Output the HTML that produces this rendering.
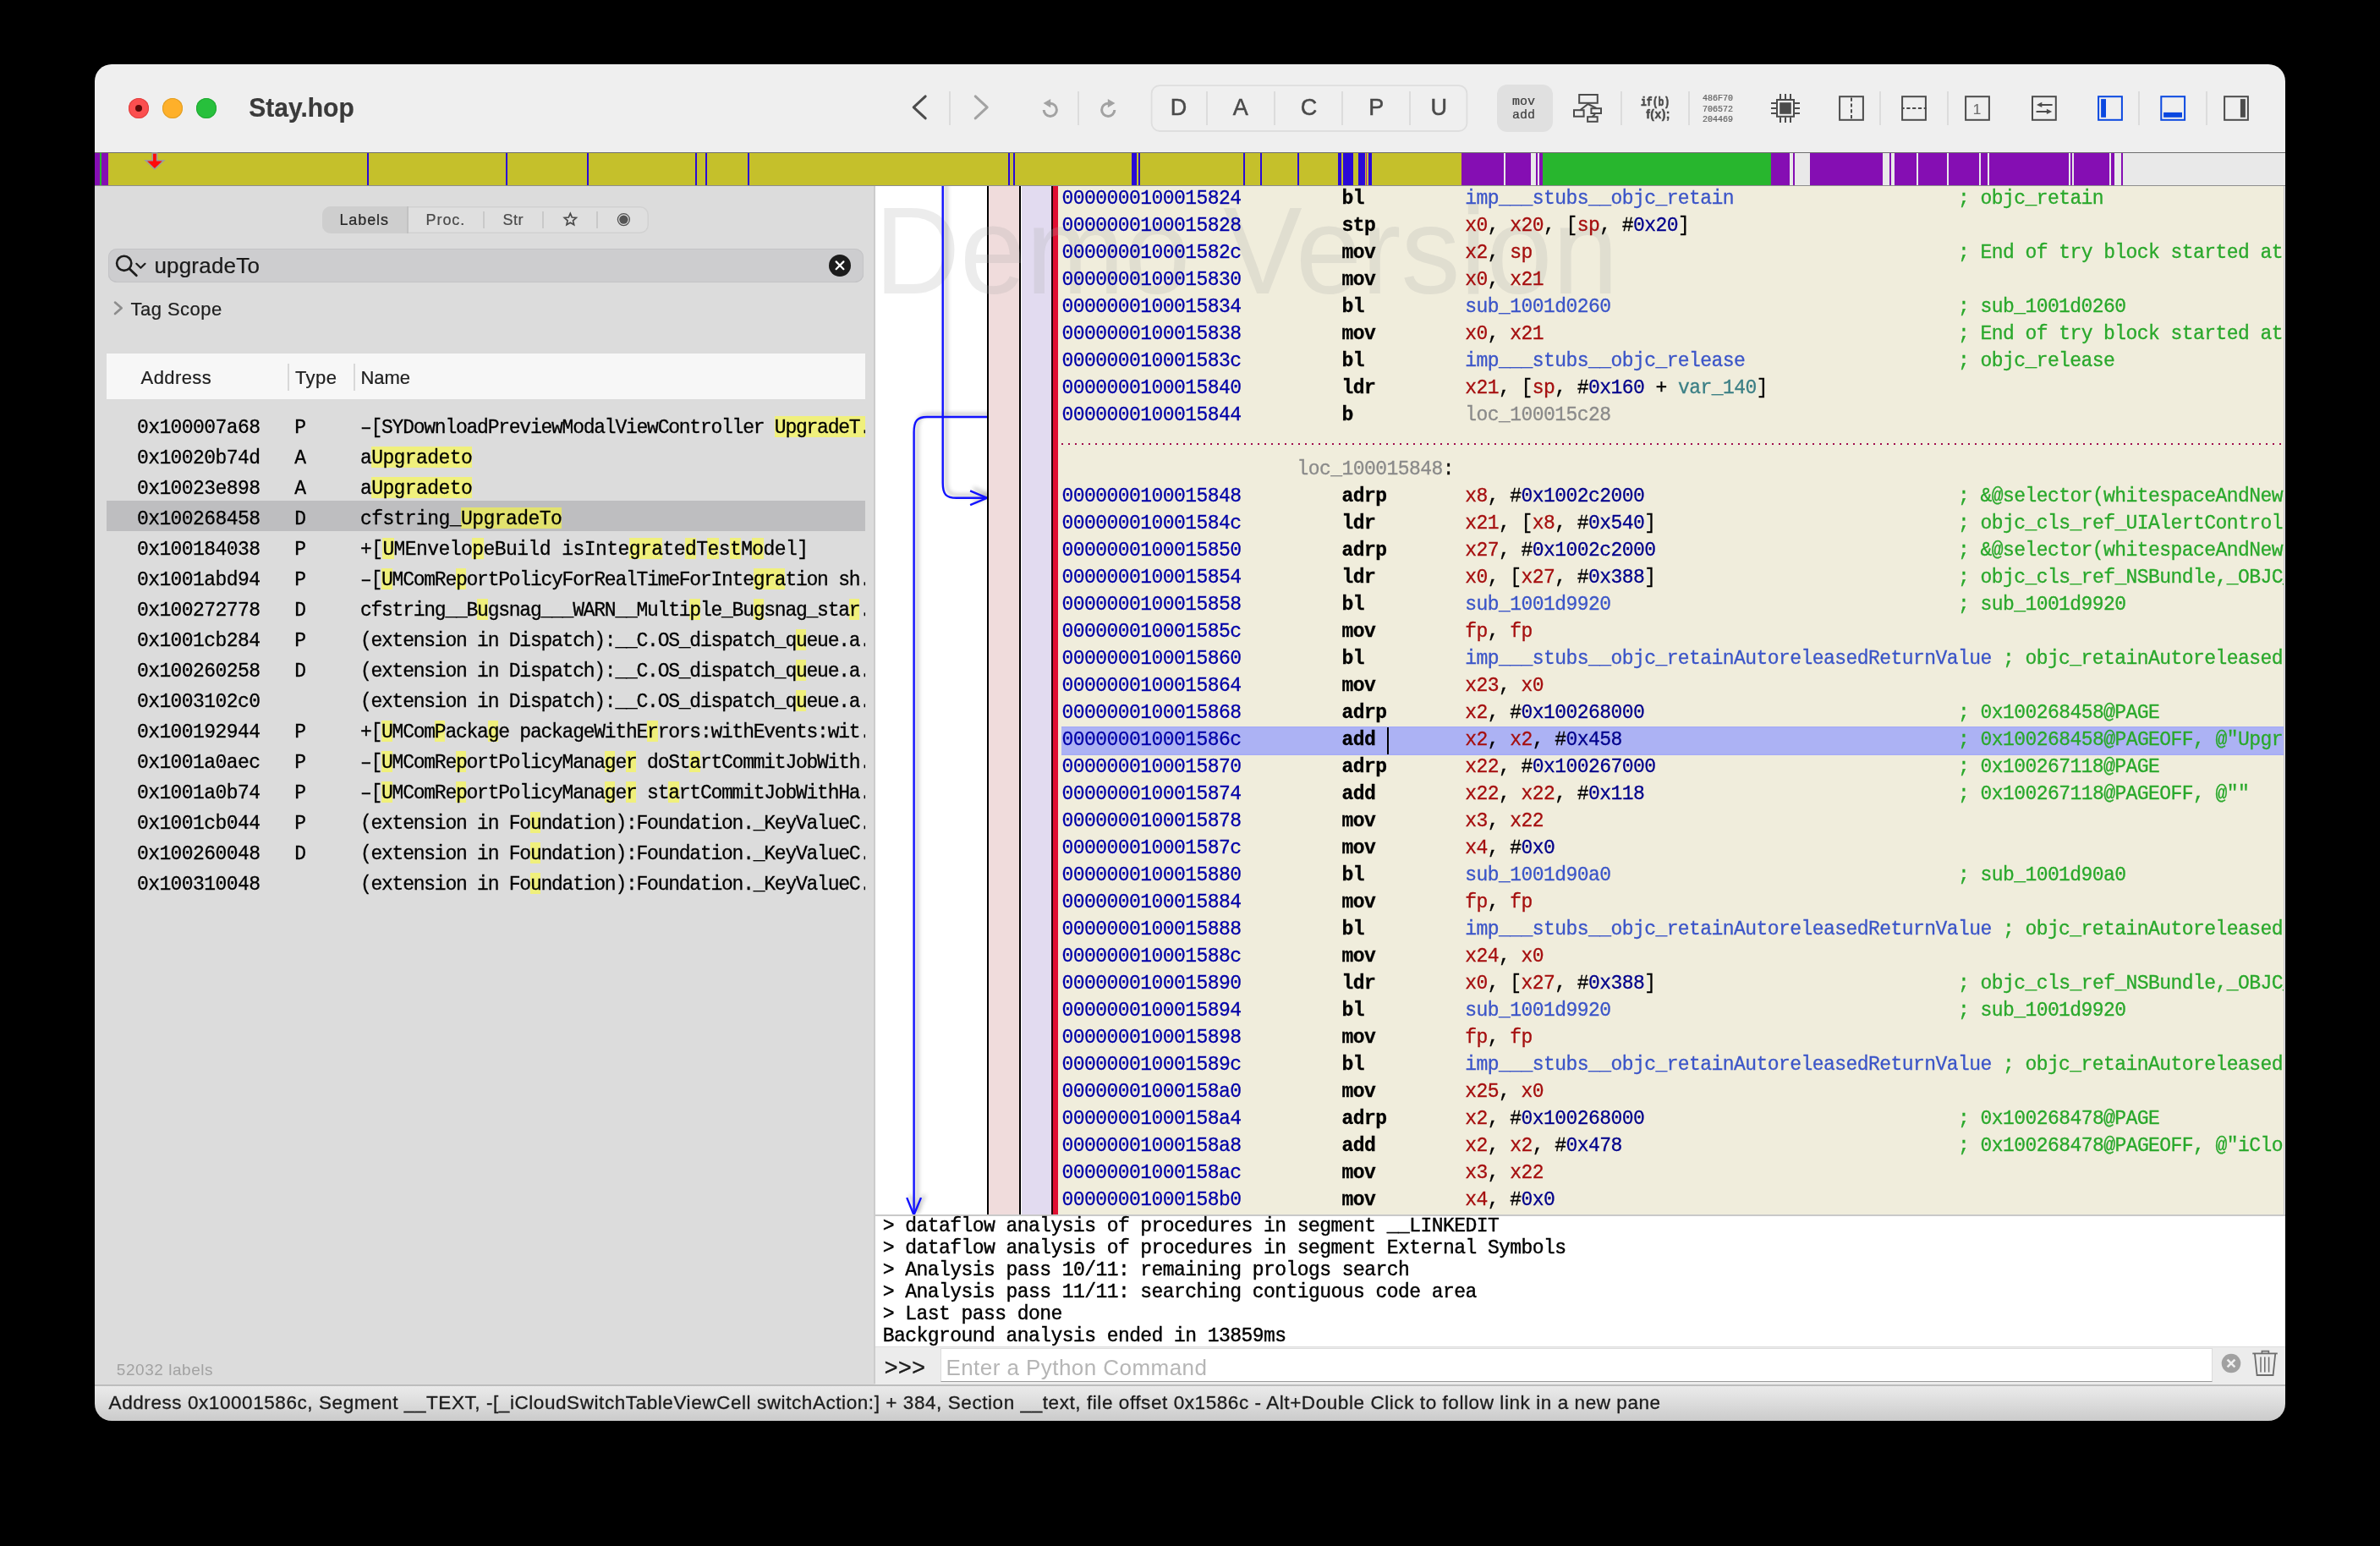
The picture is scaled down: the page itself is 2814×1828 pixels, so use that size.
<!DOCTYPE html>
<html><head><meta charset="utf-8"><title>Stay.hop</title>
<style>
html,body{margin:0;padding:0;background:#000;}
body{width:2814px;height:1828px;position:relative;overflow:hidden;font-family:"Liberation Sans",sans-serif;}
#win{position:absolute;left:0;top:0;width:2814px;height:1828px;clip-path:inset(76px 112px 148px 112px round 20px);background:#dcdcdc;will-change:transform;}
.r{position:absolute;}
.t{position:absolute;white-space:pre;-webkit-text-stroke:0.22px;}
svg{position:absolute;left:0;top:0;overflow:visible;}
.hl{background:#f0f07c;}
.row{position:absolute;left:1255.5px;height:32px;white-space:pre;font:23px/32px "Liberation Mono",monospace;letter-spacing:-0.56px;color:#000;-webkit-text-stroke:0.3px;}
.row b{font-weight:bold;}
.a{color:#0000a8;} .g{color:#a50f0f;} .n{color:#00008b;} .s{color:#3b55c8;} .c{color:#29a82b;} .l{color:#8a8a8a;} .v{color:#3b7f85;}
.lr{position:absolute;left:126px;width:897px;height:36px;white-space:pre;font:23px/36px "Liberation Mono",monospace;color:#000;overflow:hidden;-webkit-text-stroke:0.3px;}
.lr span.c1{position:absolute;left:36.5px;top:1px;letter-spacing:0.04px;}
.lr span.c2{position:absolute;left:223px;top:1px;}
.lr span.c3{position:absolute;left:300.5px;top:1px;}
.lr i{font-style:normal;background:#f0f07c;padding:2.5px 0 2.5px 0;}
.con{position:absolute;left:1045px;white-space:pre;font:23px/26px "Liberation Mono",monospace;letter-spacing:-0.56px;color:#000;-webkit-text-stroke:0.4px;}
</style></head><body><div id="win">

<div class="r" style="left:112px;top:76px;width:2590px;height:104px;background:#efefef;"></div>
<div class="r" style="left:152px;top:116px;width:24px;height:24px;border-radius:50%;background:#fb4f4f;box-shadow:inset 0 0 0 1px #e0403f;"></div>
<div class="r" style="left:192px;top:116px;width:24px;height:24px;border-radius:50%;background:#feb02a;box-shadow:inset 0 0 0 1px #e09e25;"></div>
<div class="r" style="left:232px;top:116px;width:24px;height:24px;border-radius:50%;background:#27c03c;box-shadow:inset 0 0 0 1px #22a834;"></div>
<div class="r" style="left:160px;top:124px;width:8px;height:8px;border-radius:50%;background:#5c0a08;"></div>
<div class="t" style="left:294.30px;top:108.11px;font:bold 30px/39px 'Liberation Sans', sans-serif;color:#3a3a3a;letter-spacing:0.0px;transform-origin:0 29.89px;transform:scaleY(1.066);">Stay.hop</div>
<div class="r" style="left:1122px;top:108px;width:2px;height:40px;background:#dcdcdc;"></div>
<div class="r" style="left:1274px;top:108px;width:2px;height:40px;background:#dcdcdc;"></div>
<div class="r" style="left:1916px;top:108px;width:2px;height:40px;background:#dcdcdc;"></div>
<div class="r" style="left:1996px;top:108px;width:2px;height:40px;background:#dcdcdc;"></div>
<div class="r" style="left:2222px;top:108px;width:2px;height:40px;background:#dcdcdc;"></div>
<div class="r" style="left:2302px;top:108px;width:2px;height:40px;background:#dcdcdc;"></div>
<div class="r" style="left:2528px;top:108px;width:2px;height:40px;background:#dcdcdc;"></div>
<div class="r" style="left:2608px;top:108px;width:2px;height:40px;background:#dcdcdc;"></div>
<svg width="2814" height="200" viewBox="0 0 2814 200" fill="none">
<path d="M1094.2 113.9 L1080.2 126.9 L1094.2 139.9" stroke="#4c4c4c" stroke-width="3" stroke-linecap="round" stroke-linejoin="round"/>
<path d="M1153.2 113.9 L1167.2 126.9 L1153.2 139.9" stroke="#a2a2a2" stroke-width="3" stroke-linecap="round" stroke-linejoin="round"/>
<path d="M1241.8 122.3 A7.6 7.6 0 1 1 1234.2 129.9" stroke="#a2a2a2" stroke-width="3"/>
<path d="M1233.6 122.1 L1242.2 117 L1242.2 127.2 Z" fill="#a2a2a2"/>
<path d="M1310.2 122.3 A7.6 7.6 0 1 0 1317.8 129.9" stroke="#a2a2a2" stroke-width="3"/>
<path d="M1318.4 122.1 L1309.8 117 L1309.8 127.2 Z" fill="#a2a2a2"/>
<rect x="1361.6" y="101.2" width="372.8" height="53.8" rx="9.5" ry="9.5" stroke="#dedede" stroke-width="1.8"/>
<rect x="1426" y="108" width="2" height="40" fill="#dcdcdc"/>
<rect x="1506" y="108" width="2" height="40" fill="#dcdcdc"/>
<rect x="1586" y="108" width="2" height="40" fill="#dcdcdc"/>
<rect x="1666" y="108" width="2" height="40" fill="#dcdcdc"/>
<rect x="1770" y="100" width="66" height="56" rx="12" ry="12" fill="#e0e0e0"/>
<rect x="1867.2" y="112" width="21.6" height="9.8" stroke="#4c4c4c" stroke-width="2"/>
<rect x="1861" y="130.2" width="11.6" height="7.5" stroke="#4c4c4c" stroke-width="2"/>
<rect x="1881.4" y="128.2" width="11.6" height="5.8" stroke="#4c4c4c" stroke-width="2"/>
<rect x="1877.1" y="138.2" width="11.6" height="5.6" stroke="#4c4c4c" stroke-width="2"/>
<path d="M1868.5 130 L1877.6 123 L1887.5 128" stroke="#4c4c4c" stroke-width="2"/>
<path d="M1886 135 L1882.5 138" stroke="#4c4c4c" stroke-width="2"/>
<rect x="2101" y="118" width="20" height="19.8" stroke="#4c4c4c" stroke-width="2"/>
<rect x="2104.2" y="121.2" width="13.6" height="13.6" fill="#4c4c4c"/>
<rect x="2104" y="111" width="2" height="6.5" fill="#4c4c4c"/>
<rect x="2104" y="138.5" width="2" height="6.5" fill="#4c4c4c"/>
<rect x="2110" y="111" width="2" height="6.5" fill="#4c4c4c"/>
<rect x="2110" y="138.5" width="2" height="6.5" fill="#4c4c4c"/>
<rect x="2116" y="111" width="2" height="6.5" fill="#4c4c4c"/>
<rect x="2116" y="138.5" width="2" height="6.5" fill="#4c4c4c"/>
<rect x="2094" y="121" width="6.5" height="2" fill="#4c4c4c"/>
<rect x="2121.5" y="121" width="6.5" height="2" fill="#4c4c4c"/>
<rect x="2094" y="127" width="6.5" height="2" fill="#4c4c4c"/>
<rect x="2121.5" y="127" width="6.5" height="2" fill="#4c4c4c"/>
<rect x="2094" y="133" width="6.5" height="2" fill="#4c4c4c"/>
<rect x="2121.5" y="133" width="6.5" height="2" fill="#4c4c4c"/>
<rect x="2175.1" y="114.2" width="27.8" height="27.6" stroke="#4c4c4c" stroke-width="2"/>
<path d="M2189 115 V142" stroke="#4c4c4c" stroke-width="2" stroke-dasharray="4.2 2.6" stroke-dashoffset="-0.6"/>
<rect x="2249.1" y="114.2" width="27.8" height="27.6" stroke="#4c4c4c" stroke-width="2"/>
<path d="M2249 128 H2278" stroke="#4c4c4c" stroke-width="2" stroke-dasharray="4.2 2.6" stroke-dashoffset="1.5"/>
<rect x="2324.1" y="114.2" width="27.8" height="27.6" stroke="#4c4c4c" stroke-width="2"/>
<rect x="2403.0" y="114.2" width="27.8" height="27.6" stroke="#4c4c4c" stroke-width="2"/>
<path d="M2413 123.9 H2425.9" stroke="#4c4c4c" stroke-width="2" stroke-linecap="round"/>
<path d="M2408 123.9 L2414.3 120.7 L2414.3 127.1 Z" fill="#4c4c4c"/>
<path d="M2408.3 131.9 H2421" stroke="#4c4c4c" stroke-width="2" stroke-linecap="round"/>
<path d="M2426.2 131.9 L2419.9 128.7 L2419.9 135.1 Z" fill="#4c4c4c"/>
<rect x="2481.1" y="114.2" width="27.8" height="27.6" stroke="#0a48e0" stroke-width="2"/>
<rect x="2484.1" y="117.1" width="5.9" height="21.7" fill="#0a48e0"/>
<rect x="2555.3" y="114.2" width="27.8" height="27.6" stroke="#0a48e0" stroke-width="2"/>
<rect x="2558.1" y="132.9" width="21.9" height="5.9" fill="#0a48e0"/>
<rect x="2630.1" y="114.2" width="27.8" height="27.6" stroke="#4c4c4c" stroke-width="2"/>
<rect x="2648.9" y="117.1" width="6" height="21.7" fill="#4c4c4c"/>
</svg>
<div class="t" style="left:1363.6px;width:60px;text-align:center;top:109.64px;font:27px/34px 'Liberation Sans', sans-serif;color:#4a4a4a;-webkit-text-stroke:0.5px;">D</div>
<div class="t" style="left:1436.8px;width:60px;text-align:center;top:109.64px;font:27px/34px 'Liberation Sans', sans-serif;color:#4a4a4a;-webkit-text-stroke:0.5px;">A</div>
<div class="t" style="left:1517.4px;width:60px;text-align:center;top:109.64px;font:27px/34px 'Liberation Sans', sans-serif;color:#4a4a4a;-webkit-text-stroke:0.5px;">C</div>
<div class="t" style="left:1597.2px;width:60px;text-align:center;top:109.64px;font:27px/34px 'Liberation Sans', sans-serif;color:#4a4a4a;-webkit-text-stroke:0.5px;">P</div>
<div class="t" style="left:1671.2px;width:60px;text-align:center;top:109.64px;font:27px/34px 'Liberation Sans', sans-serif;color:#4a4a4a;-webkit-text-stroke:0.5px;">U</div>
<div class="t" style="left:1788.00px;top:110.51px;font:normal 15px/20px 'Liberation Mono', monospace;color:#3e3e3e;letter-spacing:0px;">mov</div>
<div class="t" style="left:1788.00px;top:126.81px;font:normal 15px/20px 'Liberation Mono', monospace;color:#3e3e3e;letter-spacing:0px;">add</div>
<div class="t" style="left:1939.60px;top:111.97px;font:bold 14px/18px 'Liberation Mono', monospace;color:#4a4a4a;letter-spacing:0px;transform-origin:0 0;transform:scaleX(0.815);-webkit-text-stroke:0.6px;">if(b)</div>
<div class="t" style="left:1946.20px;top:126.15px;font:bold 14px/18px 'Liberation Sans', sans-serif;color:#4a4a4a;letter-spacing:0.45px;-webkit-text-stroke:0.45px;">f(x);</div>
<div class="t" style="left:2013.00px;top:109.64px;font:normal 10px/13px 'Liberation Mono', monospace;color:#666;letter-spacing:0px;">486F70</div>
<div class="t" style="left:2013.00px;top:122.64px;font:normal 10px/13px 'Liberation Mono', monospace;color:#666;letter-spacing:0px;">706572</div>
<div class="t" style="left:2013.00px;top:135.04px;font:normal 10px/13px 'Liberation Mono', monospace;color:#666;letter-spacing:0px;">204469</div>
<div class="t" style="left:2332.80px;top:119.31px;font:normal 17px/22px 'Liberation Sans', sans-serif;color:#6e6e6e;letter-spacing:0px;">1</div>
<div class="r" style="left:112px;top:180px;width:2590px;height:40px;background:#c5c02b;"></div>
<div class="r" style="left:112px;top:180px;width:6px;height:40px;background:#850eb3;"></div>
<div class="r" style="left:118px;top:180px;width:2px;height:40px;background:#28b62e;"></div>
<div class="r" style="left:120px;top:180px;width:8px;height:40px;background:#850eb3;"></div>
<div class="r" style="left:434px;top:180px;width:2px;height:40px;background:#2a0ad6;"></div>
<div class="r" style="left:598px;top:180px;width:2px;height:40px;background:#2a0ad6;"></div>
<div class="r" style="left:694px;top:180px;width:2px;height:40px;background:#2a0ad6;"></div>
<div class="r" style="left:822px;top:180px;width:2px;height:40px;background:#2a0ad6;"></div>
<div class="r" style="left:834px;top:180px;width:2px;height:40px;background:#2a0ad6;"></div>
<div class="r" style="left:884px;top:180px;width:2px;height:40px;background:#2a0ad6;"></div>
<div class="r" style="left:1192px;top:180px;width:2px;height:40px;background:#2a0ad6;"></div>
<div class="r" style="left:1198px;top:180px;width:2px;height:40px;background:#2a0ad6;"></div>
<div class="r" style="left:1338px;top:180px;width:6px;height:40px;background:#2a0ad6;"></div>
<div class="r" style="left:1346px;top:180px;width:2px;height:40px;background:#2a0ad6;"></div>
<div class="r" style="left:1470px;top:180px;width:2px;height:40px;background:#2a0ad6;"></div>
<div class="r" style="left:1490px;top:180px;width:2px;height:40px;background:#2a0ad6;"></div>
<div class="r" style="left:1534px;top:180px;width:2px;height:40px;background:#2a0ad6;"></div>
<div class="r" style="left:1582px;top:180px;width:4px;height:40px;background:#2a0ad6;"></div>
<div class="r" style="left:1588px;top:180px;width:12px;height:40px;background:#2a0ad6;"></div>
<div class="r" style="left:1606px;top:180px;width:8.4px;height:40px;background:#2a0ad6;"></div>
<div class="r" style="left:1614.6px;top:180px;width:1.4px;height:40px;background:#c020a0;"></div>
<div class="r" style="left:1618px;top:180px;width:4px;height:40px;background:#2a0ad6;"></div>
<div class="r" style="left:1728px;top:180px;width:50px;height:40px;background:#850eb3;"></div>
<div class="r" style="left:1778px;top:180px;width:2px;height:40px;background:#e9e9e9;"></div>
<div class="r" style="left:1780px;top:180px;width:30px;height:40px;background:#850eb3;"></div>
<div class="r" style="left:1810px;top:180px;width:6px;height:40px;background:#e9e9e9;"></div>
<div class="r" style="left:1816px;top:180px;width:2px;height:40px;background:#850eb3;"></div>
<div class="r" style="left:1818px;top:180px;width:2px;height:40px;background:#e9e9e9;"></div>
<div class="r" style="left:1820px;top:180px;width:4px;height:40px;background:#850eb3;"></div>
<div class="r" style="left:1824px;top:180px;width:270px;height:40px;background:#28b62e;"></div>
<div class="r" style="left:2094px;top:180px;width:22px;height:40px;background:#850eb3;"></div>
<div class="r" style="left:2116px;top:180px;width:4px;height:40px;background:#e9e9e9;"></div>
<div class="r" style="left:2120px;top:180px;width:2px;height:40px;background:#850eb3;"></div>
<div class="r" style="left:2122px;top:180px;width:18px;height:40px;background:#e9e9e9;"></div>
<div class="r" style="left:2140px;top:180px;width:86px;height:40px;background:#850eb3;"></div>
<div class="r" style="left:2226px;top:180px;width:8px;height:40px;background:#e9e9e9;"></div>
<div class="r" style="left:2234px;top:180px;width:2px;height:40px;background:#850eb3;"></div>
<div class="r" style="left:2236px;top:180px;width:4px;height:40px;background:#e9e9e9;"></div>
<div class="r" style="left:2240px;top:180px;width:26px;height:40px;background:#850eb3;"></div>
<div class="r" style="left:2266px;top:180px;width:2px;height:40px;background:#e9e9e9;"></div>
<div class="r" style="left:2268px;top:180px;width:34px;height:40px;background:#850eb3;"></div>
<div class="r" style="left:2302px;top:180px;width:2px;height:40px;background:#e9e9e9;"></div>
<div class="r" style="left:2304px;top:180px;width:36px;height:40px;background:#850eb3;"></div>
<div class="r" style="left:2340px;top:180px;width:2px;height:40px;background:#e9e9e9;"></div>
<div class="r" style="left:2342px;top:180px;width:8px;height:40px;background:#850eb3;"></div>
<div class="r" style="left:2350px;top:180px;width:2px;height:40px;background:#e9e9e9;"></div>
<div class="r" style="left:2352px;top:180px;width:94px;height:40px;background:#850eb3;"></div>
<div class="r" style="left:2446px;top:180px;width:2px;height:40px;background:#e9e9e9;"></div>
<div class="r" style="left:2448px;top:180px;width:2px;height:40px;background:#850eb3;"></div>
<div class="r" style="left:2450px;top:180px;width:2px;height:40px;background:#e9e9e9;"></div>
<div class="r" style="left:2452px;top:180px;width:42px;height:40px;background:#850eb3;"></div>
<div class="r" style="left:2494px;top:180px;width:2px;height:40px;background:#e9e9e9;"></div>
<div class="r" style="left:2496px;top:180px;width:4px;height:40px;background:#850eb3;"></div>
<div class="r" style="left:2500px;top:180px;width:8px;height:40px;background:#e9e9e9;"></div>
<div class="r" style="left:2508px;top:180px;width:2px;height:40px;background:#850eb3;"></div>
<div class="r" style="left:2510px;top:180px;width:192px;height:40px;background:#e9e9e9;"></div>
<div class="r" style="left:112px;top:180px;width:2590px;height:1.2px;background:#6f6f6f;"></div>
<div class="r" style="left:112px;top:219px;width:2590px;height:1px;background:#8e8e8e;"></div>
<svg width="2814" height="260" viewBox="0 0 2814 260"><path d="M180.2 181 H185.6 V189.8 H193.6 L182.9 200 L172.2 189.8 H180.2 Z" fill="#ff0a0a" stroke="#9c9c9c" stroke-width="1.6" stroke-linejoin="miter"/></svg>
<div class="r" style="left:112px;top:220px;width:923px;height:1416px;background:#dcdcdc;"></div>
<div class="r" style="left:1033px;top:220px;width:2px;height:1416px;background:#cccccc;"></div>
<div class="r" style="left:381px;top:244px;width:386px;height:32px;border-radius:10px;background:#dfdfdf;box-shadow:inset 0 0 0 1.5px #d1d1d1;overflow:hidden;"><div class="r" style="left:0;top:0;width:100px;height:32px;background:#cecece;"></div><div class="r" style="left:100px;top:0;width:2px;height:32px;background:#c2c2c2;"></div></div>
<div class="r" style="left:571px;top:250px;width:2px;height:19.5px;background:#c9c9c9;"></div>
<div class="r" style="left:641px;top:250px;width:2px;height:19.5px;background:#c9c9c9;"></div>
<div class="r" style="left:704.7px;top:250px;width:2px;height:19.5px;background:#c9c9c9;"></div>
<div class="t" style="left:330.7px;width:200px;text-align:center;top:248.56px;font:18px/23px 'Liberation Sans', sans-serif;color:#262626;letter-spacing:0.9px;">Labels</div>
<div class="t" style="left:426.9px;width:200px;text-align:center;top:248.56px;font:18px/23px 'Liberation Sans', sans-serif;color:#4a4a4a;letter-spacing:0.95px;">Proc.</div>
<div class="t" style="left:506.79999999999995px;width:200px;text-align:center;top:248.56px;font:18px/23px 'Liberation Sans', sans-serif;color:#4a4a4a;letter-spacing:0.5px;">Str</div>
<div class="r" style="left:128px;top:294px;width:893px;height:39.5px;border-radius:10px;background:#cdcdcf;box-shadow:inset 0 0 0 1px #c4c4c6, inset 0 -1px 0 #bebec1;"></div>
<div class="t" style="left:182.40px;top:297.39px;font:normal 26px/34px 'Liberation Sans', sans-serif;color:#1a1a1a;letter-spacing:0.2px;">upgradeTo</div>
<div class="r" style="left:980px;top:300.8px;width:26px;height:26px;border-radius:50%;background:#1c1c1c;"></div>
<svg width="2814" height="1828" viewBox="0 0 2814 1828" fill="none">
<polygon points="674.30,252.40 676.30,257.05 681.34,257.51 677.53,260.85 678.65,265.79 674.30,263.20 669.95,265.79 671.07,260.85 667.26,257.51 672.30,257.05" stroke="#4a4a4a" stroke-width="1.7" stroke-linejoin="miter"/>
<circle cx="737.4" cy="259.6" r="7" stroke="#555" stroke-width="1.3"/><circle cx="737.4" cy="259.6" r="5.2" fill="#555"/>
<circle cx="146.7" cy="311.3" r="8.6" stroke="#1c1c1c" stroke-width="2.6"/>
<path d="M153 317.8 L161.3 325.8" stroke="#1c1c1c" stroke-width="2.8" stroke-linecap="round"/>
<path d="M161.3 311.8 L166.4 316.8 L171.5 311.8" stroke="#1c1c1c" stroke-width="2.2" stroke-linecap="round" stroke-linejoin="round"/>
<path d="M136.0 357.6 L143.7 364.3 L136.0 371.0" stroke="#8c8c8c" stroke-width="2.6" stroke-linecap="round" stroke-linejoin="round"/>
</svg>
<svg width="2814" height="400" viewBox="0 0 2814 400"><path d="M988.6 309.4 L997.4 318.2 M997.4 309.4 L988.6 318.2" stroke="#fff" stroke-width="2.2" stroke-linecap="round"/></svg>
<div class="t" style="left:154.60px;top:351.28px;font:normal 22px/29px 'Liberation Sans', sans-serif;color:#1e1e1e;letter-spacing:0.45px;">Tag Scope</div>
<div class="r" style="left:126px;top:418px;width:897px;height:54px;background:#f7f7f7;"></div>
<div class="r" style="left:340.2px;top:430px;width:2px;height:31.5px;background:#d8d8d8;"></div>
<div class="r" style="left:418px;top:430px;width:2px;height:31.5px;background:#d8d8d8;"></div>
<div class="t" style="left:166.60px;top:431.68px;font:normal 22px/29px 'Liberation Sans', sans-serif;color:#1e1e1e;letter-spacing:0.4px;">Address</div>
<div class="t" style="left:349.00px;top:431.68px;font:normal 22px/29px 'Liberation Sans', sans-serif;color:#1e1e1e;letter-spacing:0.4px;">Type</div>
<div class="t" style="left:426.40px;top:431.68px;font:normal 22px/29px 'Liberation Sans', sans-serif;color:#1e1e1e;letter-spacing:0.0px;">Name</div>
<div class="lr" style="top:484px;"><div class="r" style="left:789.74px;top:8px;width:113.04px;height:25px;background:#f0f07c;"></div><span class="r" style="left:35.900000000000006px;top:4.0px;letter-spacing:-0.56px;">0x100007a68</span><span class="r" style="left:222.3px;top:4.0px;">P</span><span class="r" style="left:299.9px;top:4.0px;letter-spacing:-1.24px;">–[SYDownloadPreviewModalViewController UpgradeT.</span></div>
<div class="lr" style="top:520px;"><div class="r" style="left:313.14px;top:8px;width:119.16px;height:25px;background:#f0f07c;"></div><span class="r" style="left:35.900000000000006px;top:4.0px;letter-spacing:-0.56px;">0x10020b74d</span><span class="r" style="left:222.3px;top:4.0px;">A</span><span class="r" style="left:299.9px;top:4.0px;letter-spacing:-0.56px;">aUpgradeto</span></div>
<div class="lr" style="top:556px;"><div class="r" style="left:313.14px;top:8px;width:119.16px;height:25px;background:#f0f07c;"></div><span class="r" style="left:35.900000000000006px;top:4.0px;letter-spacing:-0.56px;">0x10023e898</span><span class="r" style="left:222.3px;top:4.0px;">A</span><span class="r" style="left:299.9px;top:4.0px;letter-spacing:-0.56px;">aUpgradeto</span></div>
<div class="lr" style="top:592px;background:#bebec0;"><div class="r" style="left:419.06px;top:8px;width:119.16px;height:25px;background:#e2e26e;"></div><span class="r" style="left:35.900000000000006px;top:4.0px;letter-spacing:-0.56px;">0x100268458</span><span class="r" style="left:222.3px;top:4.0px;">D</span><span class="r" style="left:299.9px;top:4.0px;letter-spacing:-0.56px;">cfstring_UpgradeTo</span></div>
<div class="lr" style="top:628px;"><div class="r" style="left:326.38px;top:8px;width:13.24px;height:25px;background:#f0f07c;"></div><div class="r" style="left:432.30px;top:8px;width:13.24px;height:25px;background:#f0f07c;"></div><div class="r" style="left:617.66px;top:8px;width:39.72px;height:25px;background:#f0f07c;"></div><div class="r" style="left:683.86px;top:8px;width:13.24px;height:25px;background:#f0f07c;"></div><div class="r" style="left:710.34px;top:8px;width:13.24px;height:25px;background:#f0f07c;"></div><div class="r" style="left:736.82px;top:8px;width:13.24px;height:25px;background:#f0f07c;"></div><div class="r" style="left:763.30px;top:8px;width:13.24px;height:25px;background:#f0f07c;"></div><span class="r" style="left:35.900000000000006px;top:4.0px;letter-spacing:-0.56px;">0x100184038</span><span class="r" style="left:222.3px;top:4.0px;">P</span><span class="r" style="left:299.9px;top:4.0px;letter-spacing:-0.56px;">+[UMEnvelopeBuild isIntegratedTestModel]</span></div>
<div class="lr" style="top:664px;"><div class="r" style="left:325.02px;top:8px;width:12.56px;height:25px;background:#f0f07c;"></div><div class="r" style="left:412.94px;top:8px;width:12.56px;height:25px;background:#f0f07c;"></div><div class="r" style="left:764.62px;top:8px;width:37.68px;height:25px;background:#f0f07c;"></div><span class="r" style="left:35.900000000000006px;top:4.0px;letter-spacing:-0.56px;">0x1001abd94</span><span class="r" style="left:222.3px;top:4.0px;">P</span><span class="r" style="left:299.9px;top:4.0px;letter-spacing:-1.24px;">–[UMComReportPolicyForRealTimeForIntegration sh.</span></div>
<div class="lr" style="top:700px;"><div class="r" style="left:438.06px;top:8px;width:12.56px;height:25px;background:#f0f07c;"></div><div class="r" style="left:689.26px;top:8px;width:12.56px;height:25px;background:#f0f07c;"></div><div class="r" style="left:764.62px;top:8px;width:12.56px;height:25px;background:#f0f07c;"></div><div class="r" style="left:877.66px;top:8px;width:12.56px;height:25px;background:#f0f07c;"></div><span class="r" style="left:35.900000000000006px;top:4.0px;letter-spacing:-0.56px;">0x100272778</span><span class="r" style="left:222.3px;top:4.0px;">D</span><span class="r" style="left:299.9px;top:4.0px;letter-spacing:-1.24px;">cfstring__Bugsnag___WARN__Multiple_Bugsnag_star.</span></div>
<div class="lr" style="top:736px;"><div class="r" style="left:814.86px;top:8px;width:12.56px;height:25px;background:#f0f07c;"></div><span class="r" style="left:35.900000000000006px;top:4.0px;letter-spacing:-0.56px;">0x1001cb284</span><span class="r" style="left:222.3px;top:4.0px;">P</span><span class="r" style="left:299.9px;top:4.0px;letter-spacing:-1.24px;">(extension in Dispatch):__C.OS_dispatch_queue.a.</span></div>
<div class="lr" style="top:772px;"><div class="r" style="left:814.86px;top:8px;width:12.56px;height:25px;background:#f0f07c;"></div><span class="r" style="left:35.900000000000006px;top:4.0px;letter-spacing:-0.56px;">0x100260258</span><span class="r" style="left:222.3px;top:4.0px;">D</span><span class="r" style="left:299.9px;top:4.0px;letter-spacing:-1.24px;">(extension in Dispatch):__C.OS_dispatch_queue.a.</span></div>
<div class="lr" style="top:808px;"><div class="r" style="left:814.86px;top:8px;width:12.56px;height:25px;background:#f0f07c;"></div><span class="r" style="left:35.900000000000006px;top:4.0px;letter-spacing:-0.56px;">0x1003102c0</span><span class="r" style="left:299.9px;top:4.0px;letter-spacing:-1.24px;">(extension in Dispatch):__C.OS_dispatch_queue.a.</span></div>
<div class="lr" style="top:844px;"><div class="r" style="left:325.02px;top:8px;width:12.56px;height:25px;background:#f0f07c;"></div><div class="r" style="left:387.82px;top:8px;width:12.56px;height:25px;background:#f0f07c;"></div><div class="r" style="left:450.62px;top:8px;width:12.56px;height:25px;background:#f0f07c;"></div><div class="r" style="left:639.02px;top:8px;width:12.56px;height:25px;background:#f0f07c;"></div><span class="r" style="left:35.900000000000006px;top:4.0px;letter-spacing:-0.56px;">0x100192944</span><span class="r" style="left:222.3px;top:4.0px;">P</span><span class="r" style="left:299.9px;top:4.0px;letter-spacing:-1.24px;">+[UMComPackage packageWithErrors:withEvents:wit.</span></div>
<div class="lr" style="top:880px;"><div class="r" style="left:325.02px;top:8px;width:12.56px;height:25px;background:#f0f07c;"></div><div class="r" style="left:412.94px;top:8px;width:12.56px;height:25px;background:#f0f07c;"></div><div class="r" style="left:588.78px;top:8px;width:12.56px;height:25px;background:#f0f07c;"></div><div class="r" style="left:613.90px;top:8px;width:12.56px;height:25px;background:#f0f07c;"></div><div class="r" style="left:689.26px;top:8px;width:12.56px;height:25px;background:#f0f07c;"></div><span class="r" style="left:35.900000000000006px;top:4.0px;letter-spacing:-0.56px;">0x1001a0aec</span><span class="r" style="left:222.3px;top:4.0px;">P</span><span class="r" style="left:299.9px;top:4.0px;letter-spacing:-1.24px;">–[UMComReportPolicyManager doStartCommitJobWith.</span></div>
<div class="lr" style="top:916px;"><div class="r" style="left:325.02px;top:8px;width:12.56px;height:25px;background:#f0f07c;"></div><div class="r" style="left:412.94px;top:8px;width:12.56px;height:25px;background:#f0f07c;"></div><div class="r" style="left:588.78px;top:8px;width:12.56px;height:25px;background:#f0f07c;"></div><div class="r" style="left:613.90px;top:8px;width:12.56px;height:25px;background:#f0f07c;"></div><div class="r" style="left:664.14px;top:8px;width:12.56px;height:25px;background:#f0f07c;"></div><span class="r" style="left:35.900000000000006px;top:4.0px;letter-spacing:-0.56px;">0x1001a0b74</span><span class="r" style="left:222.3px;top:4.0px;">P</span><span class="r" style="left:299.9px;top:4.0px;letter-spacing:-1.24px;">–[UMComReportPolicyManager startCommitJobWithHa.</span></div>
<div class="lr" style="top:952px;"><div class="r" style="left:500.86px;top:8px;width:12.56px;height:25px;background:#f0f07c;"></div><span class="r" style="left:35.900000000000006px;top:4.0px;letter-spacing:-0.56px;">0x1001cb044</span><span class="r" style="left:222.3px;top:4.0px;">P</span><span class="r" style="left:299.9px;top:4.0px;letter-spacing:-1.24px;">(extension in Foundation):Foundation._KeyValueC.</span></div>
<div class="lr" style="top:988px;"><div class="r" style="left:500.86px;top:8px;width:12.56px;height:25px;background:#f0f07c;"></div><span class="r" style="left:35.900000000000006px;top:4.0px;letter-spacing:-0.56px;">0x100260048</span><span class="r" style="left:222.3px;top:4.0px;">D</span><span class="r" style="left:299.9px;top:4.0px;letter-spacing:-1.24px;">(extension in Foundation):Foundation._KeyValueC.</span></div>
<div class="lr" style="top:1024px;"><div class="r" style="left:500.86px;top:8px;width:12.56px;height:25px;background:#f0f07c;"></div><span class="r" style="left:35.900000000000006px;top:4.0px;letter-spacing:-0.56px;">0x100310048</span><span class="r" style="left:299.9px;top:4.0px;letter-spacing:-1.24px;">(extension in Foundation):Foundation._KeyValueC.</span></div>
<div class="t" style="left:137.80px;top:1606.72px;font:normal 19px/25px 'Liberation Sans', sans-serif;color:#a2a2a2;letter-spacing:0.55px;-webkit-text-stroke:0;">52032 labels</div>
<div class="r" style="left:1035px;top:220px;width:1667px;height:1216px;background:#ffffff;"></div>
<div class="r" style="left:1250.8px;top:220px;width:1452px;height:1216px;background:#f0eddc;"></div>
<div class="r" style="left:1167.1px;top:220px;width:2.2px;height:1216px;background:#000;"></div>
<div class="r" style="left:1169.3px;top:220px;width:36.2px;height:1216px;background:#f0dcdc;"></div>
<div class="r" style="left:1205.4px;top:220px;width:2.1px;height:1216px;background:#000;"></div>
<div class="r" style="left:1207.5px;top:220px;width:35.7px;height:1216px;background:#e2dbf0;"></div>
<div class="r" style="left:1243.2px;top:220px;width:1.9px;height:1216px;background:#1e0408;"></div>
<div class="r" style="left:1245.0px;top:220px;width:5.9px;height:1216px;background:#e00f32;"></div>
<div class="t" style="left:1034.0px;top:214.49px;font:140px/170px 'Liberation Sans', sans-serif;color:rgba(170,170,170,0.22);-webkit-text-stroke:0;transform-origin:0 133.51px;transform:scaleY(1.046);">Demo Version</div>
<div class="r" style="left:2700px;top:220px;width:1px;height:1216px;background:#c4c4ca;"></div>
<div class="r" style="left:2701px;top:220px;width:1px;height:1216px;background:#ececec;"></div>
<div class="r" style="left:1254.5px;top:859.3px;width:1445.5px;height:33.4px;background:#acb2f4;box-shadow:inset 0 1.2px 0 #a4aaf6, inset 0 -1.2px 0 #a4aaf6;"></div>
<div class="r" style="left:1640.0px;top:860px;width:2.2px;height:32.4px;background:#000;"></div>
<div class="r" style="left:1255.0px;top:524px;width:1444.5px;height:2px;background:repeating-linear-gradient(90deg,#a00c4c 0,#a00c4c 2px,transparent 2px,transparent 8px);"></div>
<div class="r" style="left:1250.8px;top:220px;width:1449px;height:1216px;overflow:hidden;"><div class="r" style="left:-1250.8px;top:-220px;width:2814px;height:1828px;">
<div class="row" style="top:218.70px;"><span class="a">0000000100015824</span>         <b>bl</b>         <span class="s">imp___stubs__objc_retain</span>                    <span class="c">; objc_retain</span></div>
<div class="row" style="top:250.70px;"><span class="a">0000000100015828</span>         <b>stp</b>        <span class="g">x0</span>, <span class="g">x20</span>, [<span class="g">sp</span>, #<span class="n">0x20</span>]</div>
<div class="row" style="top:282.70px;"><span class="a">000000010001582c</span>         <b>mov</b>        <span class="g">x2</span>, <span class="g">sp</span>                                      <span class="c">; End of try block started at 0x1000157e8</span></div>
<div class="row" style="top:314.70px;"><span class="a">0000000100015830</span>         <b>mov</b>        <span class="g">x0</span>, <span class="g">x21</span></div>
<div class="row" style="top:346.70px;"><span class="a">0000000100015834</span>         <b>bl</b>         <span class="s">sub_1001d0260</span>                               <span class="c">; sub_1001d0260</span></div>
<div class="row" style="top:378.70px;"><span class="a">0000000100015838</span>         <b>mov</b>        <span class="g">x0</span>, <span class="g">x21</span>                                     <span class="c">; End of try block started at 0x100015830</span></div>
<div class="row" style="top:410.70px;"><span class="a">000000010001583c</span>         <b>bl</b>         <span class="s">imp___stubs__objc_release</span>                   <span class="c">; objc_release</span></div>
<div class="row" style="top:442.70px;"><span class="a">0000000100015840</span>         <b>ldr</b>        <span class="g">x21</span>, [<span class="g">sp</span>, #<span class="n">0x160</span> + <span class="v">var_140</span>]</div>
<div class="row" style="top:474.70px;"><span class="a">0000000100015844</span>         <b>b</b>          <span class="l">loc_100015c28</span></div>
<div class="row" style="top:538.70px;">                     <span class="l">loc_100015848</span>:</div>
<div class="row" style="top:570.70px;"><span class="a">0000000100015848</span>         <b>adrp</b>       <span class="g">x8</span>, #<span class="n">0x1002c2000</span>                            <span class="c">; &amp;@selector(whitespaceAndNewlineCharacterSet)</span></div>
<div class="row" style="top:602.70px;"><span class="a">000000010001584c</span>         <b>ldr</b>        <span class="g">x21</span>, [<span class="g">x8</span>, #<span class="n">0x540</span>]                           <span class="c">; objc_cls_ref_UIAlertController,_OBJC_CLASS_$_UIAlertController</span></div>
<div class="row" style="top:634.70px;"><span class="a">0000000100015850</span>         <b>adrp</b>       <span class="g">x27</span>, #<span class="n">0x1002c2000</span>                           <span class="c">; &amp;@selector(whitespaceAndNewlineCharacterSet)</span></div>
<div class="row" style="top:666.70px;"><span class="a">0000000100015854</span>         <b>ldr</b>        <span class="g">x0</span>, [<span class="g">x27</span>, #<span class="n">0x388</span>]                           <span class="c">; objc_cls_ref_NSBundle,_OBJC_CLASS_$_NSBundle</span></div>
<div class="row" style="top:698.70px;"><span class="a">0000000100015858</span>         <b>bl</b>         <span class="s">sub_1001d9920</span>                               <span class="c">; sub_1001d9920</span></div>
<div class="row" style="top:730.70px;"><span class="a">000000010001585c</span>         <b>mov</b>        <span class="g">fp</span>, <span class="g">fp</span></div>
<div class="row" style="top:762.70px;"><span class="a">0000000100015860</span>         <b>bl</b>         <span class="s">imp___stubs__objc_retainAutoreleasedReturnValue</span> <span class="c">; objc_retainAutoreleasedReturnValue</span></div>
<div class="row" style="top:794.70px;"><span class="a">0000000100015864</span>         <b>mov</b>        <span class="g">x23</span>, <span class="g">x0</span></div>
<div class="row" style="top:826.70px;"><span class="a">0000000100015868</span>         <b>adrp</b>       <span class="g">x2</span>, #<span class="n">0x100268000</span>                            <span class="c">; 0x100268458@PAGE</span></div>
<div class="row" style="top:858.70px;"><span class="a">000000010001586c</span>         <b>add</b>        <span class="g">x2</span>, <span class="g">x2</span>, #<span class="n">0x458</span>                              <span class="c">; 0x100268458@PAGEOFF, @"UpgradeTo"</span></div>
<div class="row" style="top:890.70px;"><span class="a">0000000100015870</span>         <b>adrp</b>       <span class="g">x22</span>, #<span class="n">0x100267000</span>                           <span class="c">; 0x100267118@PAGE</span></div>
<div class="row" style="top:922.70px;"><span class="a">0000000100015874</span>         <b>add</b>        <span class="g">x22</span>, <span class="g">x22</span>, #<span class="n">0x118</span>                            <span class="c">; 0x100267118@PAGEOFF, @""</span></div>
<div class="row" style="top:954.70px;"><span class="a">0000000100015878</span>         <b>mov</b>        <span class="g">x3</span>, <span class="g">x22</span></div>
<div class="row" style="top:986.70px;"><span class="a">000000010001587c</span>         <b>mov</b>        <span class="g">x4</span>, #<span class="n">0x0</span></div>
<div class="row" style="top:1018.70px;"><span class="a">0000000100015880</span>         <b>bl</b>         <span class="s">sub_1001d90a0</span>                               <span class="c">; sub_1001d90a0</span></div>
<div class="row" style="top:1050.70px;"><span class="a">0000000100015884</span>         <b>mov</b>        <span class="g">fp</span>, <span class="g">fp</span></div>
<div class="row" style="top:1082.70px;"><span class="a">0000000100015888</span>         <b>bl</b>         <span class="s">imp___stubs__objc_retainAutoreleasedReturnValue</span> <span class="c">; objc_retainAutoreleasedReturnValue</span></div>
<div class="row" style="top:1114.70px;"><span class="a">000000010001588c</span>         <b>mov</b>        <span class="g">x24</span>, <span class="g">x0</span></div>
<div class="row" style="top:1146.70px;"><span class="a">0000000100015890</span>         <b>ldr</b>        <span class="g">x0</span>, [<span class="g">x27</span>, #<span class="n">0x388</span>]                           <span class="c">; objc_cls_ref_NSBundle,_OBJC_CLASS_$_NSBundle</span></div>
<div class="row" style="top:1178.70px;"><span class="a">0000000100015894</span>         <b>bl</b>         <span class="s">sub_1001d9920</span>                               <span class="c">; sub_1001d9920</span></div>
<div class="row" style="top:1210.70px;"><span class="a">0000000100015898</span>         <b>mov</b>        <span class="g">fp</span>, <span class="g">fp</span></div>
<div class="row" style="top:1242.70px;"><span class="a">000000010001589c</span>         <b>bl</b>         <span class="s">imp___stubs__objc_retainAutoreleasedReturnValue</span> <span class="c">; objc_retainAutoreleasedReturnValue</span></div>
<div class="row" style="top:1274.70px;"><span class="a">00000001000158a0</span>         <b>mov</b>        <span class="g">x25</span>, <span class="g">x0</span></div>
<div class="row" style="top:1306.70px;"><span class="a">00000001000158a4</span>         <b>adrp</b>       <span class="g">x2</span>, #<span class="n">0x100268000</span>                            <span class="c">; 0x100268478@PAGE</span></div>
<div class="row" style="top:1338.70px;"><span class="a">00000001000158a8</span>         <b>add</b>        <span class="g">x2</span>, <span class="g">x2</span>, #<span class="n">0x478</span>                              <span class="c">; 0x100268478@PAGEOFF, @"iCloud"</span></div>
<div class="row" style="top:1370.70px;"><span class="a">00000001000158ac</span>         <b>mov</b>        <span class="g">x3</span>, <span class="g">x22</span></div>
<div class="row" style="top:1402.70px;"><span class="a">00000001000158b0</span>         <b>mov</b>        <span class="g">x4</span>, #<span class="n">0x0</span></div>
</div></div>
<div class="r" style="left:1035px;top:220px;width:132.1px;height:1216px;overflow:hidden;"><svg width="2814" height="1828" viewBox="0 0 2814 1828" fill="none" style="left:-1035px;top:-220px;filter:drop-shadow(4px -3px 2.5px rgba(0,0,0,0.33));">
<g stroke="#1212ff" stroke-width="2.4" fill="none">
<path d="M1114.7 200 V571 C1114.7 584.5 1118.5 588.8 1131 588.8 H1166.5"/>
<path d="M1147.1 580.4 L1167.1 588.8 L1147.1 597.2"/>
<path d="M1180 493 H1096 C1084.5 493 1080.6 497.5 1080.6 511 V1435"/>
<path d="M1072.2 1416.1 L1080.5 1436.5 L1089 1416.1"/>
</g></svg></div>
<div class="r" style="left:1035px;top:1436px;width:1667px;height:2px;background:#c9c9c9;"></div>
<div class="r" style="left:1035px;top:1438px;width:1667px;height:154px;background:#ffffff;"></div>
<div class="con" style="left:1043.8px;top:1436.88px;">&gt; dataflow analysis of procedures in segment __LINKEDIT</div>
<div class="con" style="left:1043.8px;top:1462.92px;">&gt; dataflow analysis of procedures in segment External Symbols</div>
<div class="con" style="left:1043.8px;top:1488.96px;">&gt; Analysis pass 10/11: remaining prologs search</div>
<div class="con" style="left:1043.8px;top:1515.00px;">&gt; Analysis pass 11/11: searching contiguous code area</div>
<div class="con" style="left:1043.8px;top:1541.04px;">&gt; Last pass done</div>
<div class="con" style="left:1043.8px;top:1567.08px;">Background analysis ended in 13859ms</div>
<div class="r" style="left:1035px;top:1592px;width:1667px;height:44px;background:#ececec;"></div>
<div class="r" style="left:1035px;top:1591.5px;width:1667px;height:1px;background:#dcdcdc;"></div>
<div class="t" style="left:1045.60px;top:1601.92px;font:normal 27px/35px 'Liberation Mono', monospace;color:#1a1a1a;letter-spacing:0.0px;-webkit-text-stroke:0.3px;">&gt;&gt;&gt;</div>
<div class="r" style="left:1112.4px;top:1593.5px;width:1503.8px;height:40.8px;background:#fff;box-sizing:border-box;border:1px solid #dcdcdc;border-bottom:1.6px solid #9c9c9c;"></div>
<div class="t" style="left:1118.40px;top:1599.89px;font:normal 26px/34px 'Liberation Sans', sans-serif;color:#b6b6b6;letter-spacing:0.45px;-webkit-text-stroke:0;">Enter a Python Command</div>
<svg width="2814" height="1700" viewBox="0 0 2814 1700" fill="none">
<circle cx="2638" cy="1612" r="11.3" fill="#a1a1a1"/>
<path d="M2633.6 1607.6 L2642.4 1616.4 M2642.4 1607.6 L2633.6 1616.4" stroke="#efefef" stroke-width="2.6"/>
<g stroke="#6c6c6c" stroke-width="1.8">
<path d="M2663.3 1600.4 H2692.8"/>
<path d="M2674.4 1600 V1597.6 H2682.4 V1600" stroke-width="1.6"/>
<path d="M2666 1601 L2668.6 1626 H2687.6 L2690.2 1601"/>
<path d="M2673 1604.6 V1622.4 M2677.8 1604.6 V1622.4 M2682.6 1604.6 V1622.4" stroke-width="1.5"/>
</g></svg>
<div class="r" style="left:1035px;top:1636px;width:1667px;height:1.2px;background:#ececec;"></div>
<div class="r" style="left:112px;top:1637px;width:2590px;height:43px;background:linear-gradient(#ebebeb,#e3e3e3 30%,#cbcbcb);"></div>
<div class="r" style="left:112px;top:1637px;width:2590px;height:1.5px;background:#bdbdbd;"></div>
<div class="t" style="left:128.60px;top:1643.70px;font:normal 22.5px/29px 'Liberation Sans', sans-serif;color:#1c1c1c;letter-spacing:0.57px;-webkit-text-stroke:0.32px;">Address 0x10001586c, Segment __TEXT, -[_iCloudSwitchTableViewCell switchAction:] + 384, Section __text, file offset 0x1586c - Alt+Double Click to follow link in a new pane</div>
</div></body></html>
